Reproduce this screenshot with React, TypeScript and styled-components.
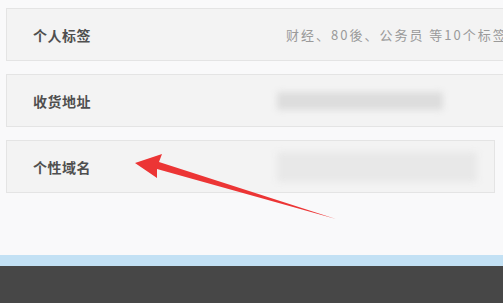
import React from "react"
import styled, { createGlobalStyle } from "styled-components"

const GlobalStyle = createGlobalStyle`
  html, body {
    margin: 0;
    padding: 0;
    width: 503px;
    height: 303px;
    overflow: hidden;
    background: #f9f9fa;
    font-family: "Noto Sans CJK SC", "Liberation Sans", sans-serif;
  }
`;

const Page = styled.div`
  position: relative;
  width: 503px;
  height: 303px;
  display: flex;
  flex-direction: column;
`;

const List = styled.div`
  display: flex;
  flex-direction: column;
  gap: 13px;
  padding: 8px 0 0 6px;
`;

const Row = styled.div<{ short?: boolean }>`
  height: 53px;
  margin-right: ${p => (p.short ? "8px" : "-4px")};
  box-sizing: border-box;
  background: #f3f3f3;
  border: 1px solid #e4e4e4;
  display: flex;
  align-items: center;
  padding-left: 26px;
  overflow: hidden;
`;

const Label = styled.div`
  flex: none;
  width: 244px;
  font-size: 14px;
  font-weight: bold;
  color: #4f4f4f;
  letter-spacing: 0.5px;
`;

const Value = styled.div`
  font-size: 13px;
  color: #9a9a9a;
  white-space: nowrap;
  letter-spacing: 2px;
  margin-left: 9px;
`;

const Blur = styled.div<{ w: number; h: number; tone: string }>`
  width: ${p => p.w}px;
  height: ${p => p.h}px;
  background: ${p => p.tone};
  filter: blur(3px);
  border-radius: 2px;
`;

const Spacer = styled.div`
  flex: 1;
`;

const BlueStrip = styled.div`
  height: 11px;
  background: #c3e1f4;
`;

const Footer = styled.div`
  height: 37px;
  background: #474747;
`;

const Arrow = styled.svg`
  position: absolute;
  left: 0;
  top: 0;
  pointer-events: none;
`;

export default function App() {
  return (
    <>
      <GlobalStyle />
      <Page>
        <List>
          <Row>
            <Label>个人标签</Label>
            <Value>财经、80後、公务员 等10个标签</Value>
          </Row>
          <Row>
            <Label>收货地址</Label>
            <Blur w={166} h={18} tone="#dddddd" />
          </Row>
          <Row short>
            <Label>个性域名</Label>
            <Blur w={200} h={30} tone="#e8e8e8" />
          </Row>
        </List>
        <Spacer />
        <BlueStrip />
        <Footer />
        <Arrow width="503" height="303" viewBox="0 0 503 303">
          <path
            d="M135 163 L162 154 L159 162 L336 219 L157 169 L157 178 Z"
            fill="#ec3535"
          />
        </Arrow>
      </Page>
    </>
  )
}
